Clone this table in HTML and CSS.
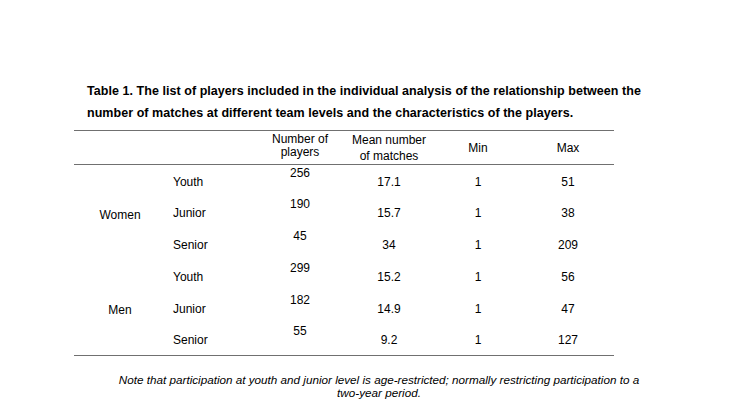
FILE: index.html
```html
<!DOCTYPE html>
<html>
<head>
<meta charset="utf-8">
<link rel="stylesheet" href="styles.css">
</head>
<body>
<div class="page">
  <p class="caption">Table 1. The list of players included in the individual analysis of the relationship between the number of matches at different team levels and the characteristics of the players.</p>
  <table class="data">
    <colgroup>
      <col class="c1"><col class="c2"><col class="c3"><col class="c4"><col class="c5"><col class="c6">
    </colgroup>
    <thead>
      <tr>
        <th></th>
        <th></th>
        <th class="h-num">Number of<br>players</th>
        <th class="h-mean">Mean number<br>of matches</th>
        <th>Min</th>
        <th>Max</th>
      </tr>
    </thead>
    <tbody>
      <tr>
        <td class="group" rowspan="3">Women</td>
        <td class="level">Youth</td>
        <td class="count">256</td>
        <td>17.1</td>
        <td>1</td>
        <td>51</td>
      </tr>
      <tr>
        <td class="level">Junior</td>
        <td class="count">190</td>
        <td>15.7</td>
        <td>1</td>
        <td>38</td>
      </tr>
      <tr>
        <td class="level">Senior</td>
        <td class="count">45</td>
        <td>34</td>
        <td>1</td>
        <td>209</td>
      </tr>
      <tr>
        <td class="group" rowspan="3">Men</td>
        <td class="level">Youth</td>
        <td class="count">299</td>
        <td>15.2</td>
        <td>1</td>
        <td>56</td>
      </tr>
      <tr>
        <td class="level">Junior</td>
        <td class="count">182</td>
        <td>14.9</td>
        <td>1</td>
        <td>47</td>
      </tr>
      <tr>
        <td class="level">Senior</td>
        <td class="count">55</td>
        <td>9.2</td>
        <td>1</td>
        <td>127</td>
      </tr>
    </tbody>
  </table>
  <p class="note">Note that participation at youth and junior level is age-restricted; normally restricting participation to a two-year period.</p>
</div>
</body>
</html>
```
FILE: styles.css
```css
html, body {
  margin: 0;
  padding: 0;
  background: #ffffff;
}

body {
  font-family: "Liberation Sans", Arial, Helvetica, sans-serif;
  color: #000;
}

.page {
  padding-top: 80px;
}

.caption {
  margin: 0 0 6px 87px;
  width: 575px;
  font-size: 12.5px;
  font-weight: bold;
  letter-spacing: 0.05px;
  line-height: 22px;
}

.data {
  margin-left: 74px;
  width: 540px;
  table-layout: fixed;
  border-collapse: collapse;
  border-top: 1px solid #707070;
  border-bottom: 1px solid #707070;
  font-size: 12px;
}

.c1 { width: 92px; }
.c2 { width: 90px; }
.c3 { width: 88px; }
.c4 { width: 90px; }
.c5 { width: 88px; }
.c6 { width: 92px; }

.data thead tr {
  height: 34px;
  border-bottom: 1px solid #707070;
}

.data th {
  font-weight: normal;
  text-align: center;
  vertical-align: middle;
  padding: 0;
  line-height: 14px;
}

.data th.h-num {
  line-height: 13px;
  padding-bottom: 3px;
}

.data th.h-mean {
  line-height: 16px;
}

.data tbody tr {
  height: 31.8px;
}

.data td {
  padding: 10px 0 0 0;
  text-align: center;
  vertical-align: top;
  line-height: 14px;
}

.data td.group {
  vertical-align: middle;
  padding-top: 5px;
}

.data td.level {
  text-align: left;
  padding-left: 7px;
}

.data td.count {
  padding-top: 1px;
}

.note {
  margin: 17px 0 0 107px;
  width: 544px;
  text-align: center;
  font-style: italic;
  font-size: 11.7px;
  line-height: 13px;
}
```
